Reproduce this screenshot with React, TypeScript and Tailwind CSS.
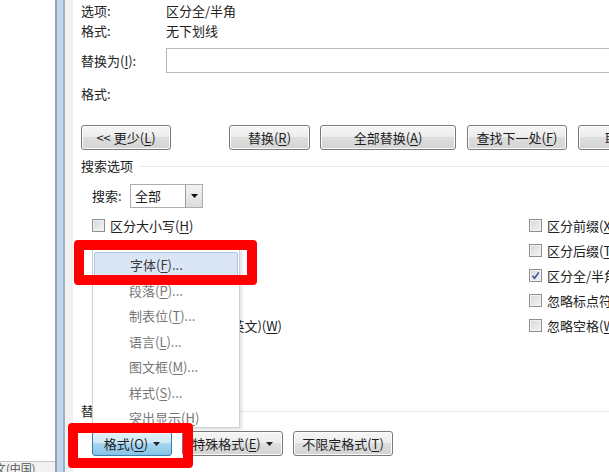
import type { ReactNode } from "react";

const btn =
  "h-[25px] shrink-0 rounded-[3px] border border-[#7a7a7a] bg-[linear-gradient(#f6f6f6,#ececec_50%,#dedede_50%,#d3d3d3)] shadow-[inset_0_0_0_1px_#fbfbfb] flex items-center justify-center whitespace-nowrap text-[#1e1e1e]";

function K({ children }: { children: ReactNode }) {
  return <span className="underline underline-offset-2">{children}</span>;
}

function Caret() {
  return (
    <svg width="7" height="4" viewBox="0 0 7 4" className="ml-[5px]">
      <path d="M0 0h7L3.5 4z" fill="#222" />
    </svg>
  );
}

function Check({ checked = false, label }: { checked?: boolean; label: ReactNode }) {
  return (
    <div className="h-[25px] flex items-center whitespace-nowrap">
      <div className="w-[13px] h-[13px] border border-[#8e8f8f] bg-[linear-gradient(135deg,#d6d6d6,#f5f5f5)] shadow-[inset_0_0_0_1px_#f2f2f2] flex items-center justify-center">
        {checked && (
          <svg width="9" height="9" viewBox="0 0 9 9">
            <path d="M1.5 4.8 3.6 7.2 7.8 1.4" fill="none" stroke="#3c4f9c" strokeWidth="1.6" />
          </svg>
        )}
      </div>
      <span className="ml-[5px]">{label}</span>
    </div>
  );
}

const menuItems: { label: ReactNode; active?: boolean }[] = [
  { label: <>字体(<K>F</K>)...</>, active: true },
  { label: <>段落(<K>P</K>)...</> },
  { label: <>制表位(<K>T</K>)...</> },
  { label: <>语言(<K>L</K>)...</> },
  { label: <>图文框(<K>M</K>)...</> },
  { label: <>样式(<K>S</K>)...</> },
  { label: <>突出显示(<K>H</K>)</> },
];

export default function App() {
  return (
    <div className="relative w-[609px] h-[472px] overflow-hidden bg-white flex font-['Noto_Sans_CJK_SC','Liberation_Sans',sans-serif]">
      {/* document area + status bar */}
      <div className="w-[55px] shrink-0 flex flex-col">
        <div className="flex-1 bg-white" />
        <div className="h-[11px] border-t border-[#c6c6c6] bg-[#f2f2f2] overflow-hidden">
          <div className="-ml-[5px] text-[11px] leading-[13px] text-[#555] whitespace-nowrap">文(中国)</div>
        </div>
      </div>

      {/* dialog frame */}
      <div className="w-[2px] shrink-0 bg-[#98a3af]" />
      <div className="w-[6px] shrink-0 bg-[#bdd6ef]" />
      <div className="w-[2px] shrink-0 bg-[#a6b0bb]" />
      <div className="w-[8px] shrink-0 bg-[#f1f1f1]" />

      {/* dialog body */}
      <div className="relative flex-1 pl-[8px] text-[13px] text-[#222] whitespace-nowrap">
        <div className="h-[21px] flex items-center">
          <span className="w-[85px]">选项:</span>
          <span>区分全/半角</span>
        </div>
        <div className="h-[20px] flex items-center">
          <span className="w-[85px]">格式:</span>
          <span>无下划线</span>
        </div>

        <div className="mt-[7px] h-[25px] flex items-center">
          <span className="w-[85px] shrink-0">替换为(<K>I</K>):</span>
          <div className="w-[460px] shrink-0 h-full border border-[#b5b8bf] bg-white" />
        </div>

        <div className="mt-[11px] h-[20px] flex items-center">
          <span>格式:</span>
        </div>

        <div className="mt-[21px] flex">
          <div className={`${btn} w-[90px]`}>&lt;&lt; 更少(<K>L</K>)</div>
          <div className={`${btn} w-[81px] ml-[58px]`}>替换(<K>R</K>)</div>
          <div className={`${btn} w-[136px] ml-[10px]`}>全部替换(<K>A</K>)</div>
          <div className={`${btn} w-[100px] ml-[11px]`}>查找下一处(<K>F</K>)</div>
          <div className={`${btn} w-[80px] ml-[11px]`}>取消</div>
        </div>

        <div className="mt-[6px] h-[20px] flex items-center">
          <span>搜索选项</span>
          <div className="ml-[7px] flex-1 h-[1px] bg-[#e2e8ee]" />
        </div>

        <div className="mt-[8px] h-[24px] pl-[11px] flex items-center">
          <span className="w-[38px]">搜索:</span>
          <div className="w-[73px] h-full flex border border-[#abadb3] bg-white">
            <span className="flex-1 pl-[4px] leading-[22px]">全部</span>
            <div className="w-[17px] border-l border-[#9a9a9a] bg-[linear-gradient(#f3f3f3,#dcdcdc)] flex items-center justify-center">
              <svg width="7" height="4" viewBox="0 0 7 4">
                <path d="M0 0h7L3.5 4z" fill="#111" />
              </svg>
            </div>
          </div>
        </div>

        <div className="mt-[5px] pl-[11px] flex">
          <div className="w-[437px] shrink-0">
            <Check label={<>区分大小写(<K>H</K>)</>} />
            <Check label={<>全字匹配(<K>Y</K>)</>} />
            <Check label={<>使用通配符(<K>U</K>)</>} />
            <Check label={<>同音(英文)(<K>K</K>)</>} />
            <Check label={<>查找单词的所有形式(英文)(<K>W</K>)</>} />
          </div>
          <div>
            <Check label={<>区分前缀(<K>X</K>)</>} />
            <Check label={<>区分后缀(<K>T</K>)</>} />
            <Check checked label={<>区分全/半角(<K>M</K>)</>} />
            <Check label={<>忽略标点符号(<K>S</K>)</>} />
            <Check label={<>忽略空格(<K>W</K>)</>} />
          </div>
        </div>

        <div className="mt-[63px] h-[20px] flex items-center">
          <span>替换</span>
          <div className="ml-[7px] flex-1 h-[1px] bg-[#e2e8ee]" />
        </div>

        <div className="mt-[10px] pl-[11px] flex">
          <div className="h-[25px] w-[80px] shrink-0 rounded-[3px] border border-[#3c7fb1] bg-[linear-gradient(#e6f4fc,#cce8f7_50%,#a8d6f0_50%,#85c2e6)] flex items-center justify-center">
            格式(<K>O</K>)
            <Caret />
          </div>
          <div className={`${btn} w-[101px] ml-[10px]`}>
            特殊格式(<K>E</K>)
            <Caret />
          </div>
          <div className={`${btn} w-[100px] ml-[10px]`}>不限定格式(<K>T</K>)</div>
        </div>

        {/* format menu */}
        <div className="absolute left-[19px] top-[249px] w-[148px] h-[179px] bg-white border border-[#cfcfcf] shadow-[2px_2px_3px_rgba(0,0,0,0.12)] pt-[2px]">
          {menuItems.map((m, i) => (
            <div
              key={i}
              className={`h-[25.5px] mx-[1px] flex items-center pl-[35px] ${
                m.active ? "border border-[#a9c6e8] bg-[#dae6f5] text-[#3a3a3a] rounded-[2px]" : "text-[#767676]"
              }`}
            >
              {m.label}
            </div>
          ))}
        </div>
      </div>

      {/* annotation boxes */}
      <div className="absolute left-[74px] top-[240px] w-[183px] h-[45px] border-[10px] border-[#ff0000] rounded-[4px]" />
      <div className="absolute left-[68px] top-[423px] w-[125px] h-[45px] border-[10px] border-[#ff0000] rounded-[4px]" />
    </div>
  );
}
